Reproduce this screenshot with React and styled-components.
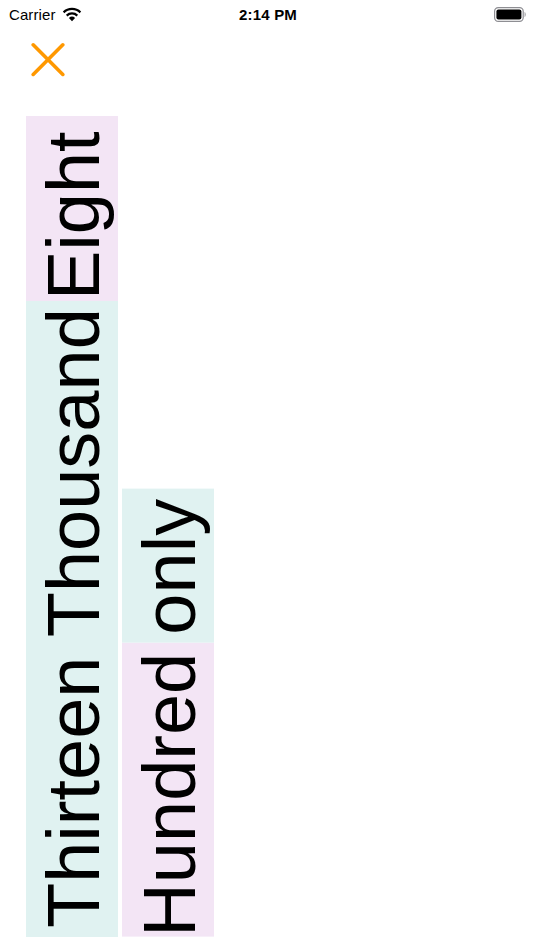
import React from "react"
import styled, { createGlobalStyle } from "styled-components"

const GlobalStyle = createGlobalStyle`
  html, body {
    margin: 0;
    padding: 0;
    background: #ffffff;
  }
  body {
    font-family: "Liberation Sans", Arial, sans-serif;
  }
`

const Screen = styled.div`
  width: 534px;
  height: 950px;
  display: flex;
  flex-direction: column;
  background: #ffffff;
  overflow: hidden;
`

const StatusBar = styled.div`
  height: 28px;
  flex: none;
  display: grid;
  grid-template-columns: 1fr auto 1fr;
  align-items: center;
  padding: 0 7px 0 9px;
  font-size: 15px;
  color: #000;
`

const Carrier = styled.div`
  display: flex;
  align-items: center;
  gap: 6px;
  letter-spacing: 0.1px;
`

const Clock = styled.div`
  font-weight: 700;
  font-size: 15px;
  letter-spacing: 0.2px;
`

const Battery = styled.div`
  justify-self: end;
  display: flex;
  align-items: center;
`

const CloseButton = styled.button`
  flex: none;
  align-self: flex-start;
  margin: 14px 0 0 31px;
  padding: 0;
  border: none;
  background: none;
  width: 35px;
  height: 35px;
  display: flex;
`

const Stage = styled.main`
  flex: 1;
  display: flex;
  align-items: flex-end;
  gap: 4px;
  padding: 0 0 13px 26px;
`

const Column = styled.div`
  writing-mode: vertical-rl;
  transform: rotate(180deg);
  display: flex;
  flex: none;
`

const Segment = styled.span`
  display: block;
  flex: none;
  background: ${props => props.$tone === "purple" ? "#f3e5f5" : "#e0f2f1"};
  padding-inline-start: ${props => props.$lead}px;
  padding-inline-end: ${props => props.$trail}px;
  padding-block-start: 4px;
  font-family: "Liberation Sans", Arial, sans-serif;
  font-size: 74px;
  line-height: 88px;
  color: #000;
  white-space: nowrap;
`

const Wifi = () => (
  <svg width="20" height="15" viewBox="0 0 20 15">
    <path d="M10 14.2 L6.9 10.9 A4.6 4.6 0 0 1 13.1 10.9 Z" fill="#000" />
    <path d="M4.7 8.6 A7.6 7.6 0 0 1 15.3 8.6" stroke="#000" strokeWidth="2.2" fill="none" />
    <path d="M1.6 5.4 A12 12 0 0 1 18.4 5.4" stroke="#000" strokeWidth="2.2" fill="none" />
  </svg>
)

const BatteryIcon = () => (
  <svg width="33" height="15" viewBox="0 0 33 15">
    <rect x="0.6" y="0.6" width="28.6" height="13.8" rx="3.6" fill="none" stroke="#8e8e93" strokeWidth="1.2" />
    <rect x="2.4" y="2.4" width="25" height="10.2" rx="2" fill="#000" />
    <path d="M30.6 5 C32 5.4 32 9.6 30.6 10 Z" fill="#8e8e93" />
  </svg>
)

const CrossIcon = () => (
  <svg width="35" height="35" viewBox="0 0 35 35">
    <path d="M2.2 2.8 L31.8 32.4 M31.8 2.8 L2.2 32.4" stroke="#ff9800" strokeWidth="3.6" strokeLinecap="round" />
  </svg>
)

const App = () => {
  return (
    <Screen>
      <GlobalStyle />
      <StatusBar>
        <Carrier>
          Carrier <Wifi />
        </Carrier>
        <Clock>2:14 PM</Clock>
        <Battery>
          <BatteryIcon />
        </Battery>
      </StatusBar>
      <CloseButton aria-label="Close">
        <CrossIcon />
      </CloseButton>
      <Stage>
        <Column>
          <Segment $tone="teal" $lead={9} $trail={7}>Thirteen Thousand</Segment>
          <Segment $tone="purple" $lead={1.5} $trail={15}>Eight</Segment>
        </Column>
        <Column>
          <Segment $tone="purple" $lead={0} $trail={10}>Hundred</Segment>
          <Segment $tone="teal" $lead={8} $trail={10}>only</Segment>
        </Column>
      </Stage>
    </Screen>
  )
}

export default App
